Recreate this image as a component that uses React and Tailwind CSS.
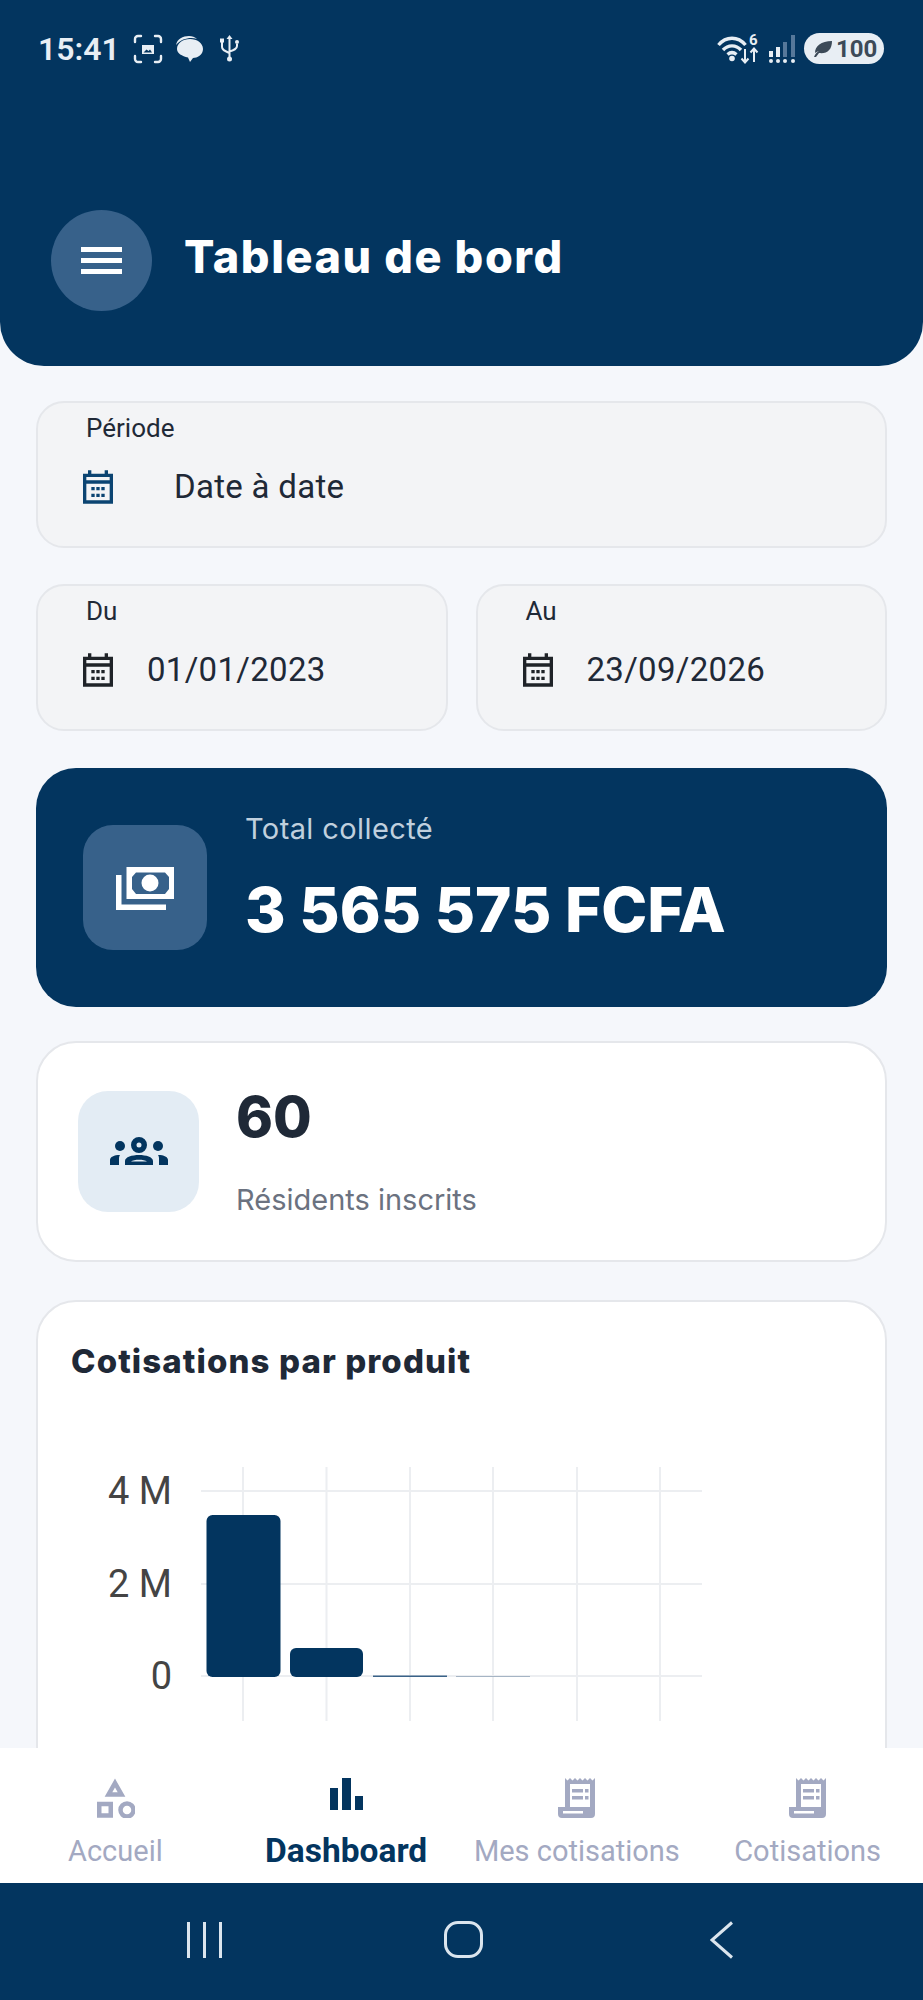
import React from "react";

const navy = "#03355f";

const CalendarIcon = ({ color }) => (
  <svg width="40" height="40" viewBox="0 0 24 24" fill={color} className="shrink-0">
    <path fillRule="evenodd" d="M21 4h-3V2h-2v2H8V2H6v2H3v18h18V4zm-2 16H5V10h14v10zM19 8H5V6h14v2z" />
    <path d="M8 12h2v2H8zM11 12h2v2h-2zM14 12h2v2h-2zM8 16h2v2H8zM11 16h2v2h-2zM14 16h2v2h-2z" />
  </svg>
);

// Status bar glyphs
const StatusLeft = () => (
  <div className="flex items-center ml-[13px]">
    <svg width="30" height="30" viewBox="0 0 30 30" fill="none" stroke="#e8eef4" strokeWidth="2.4" strokeLinecap="round">
      <path d="M2 8V5a3 3 0 0 1 3-3h3M22 2h3a3 3 0 0 1 3 3v3M28 22v3a3 3 0 0 1-3 3h-3M8 28H5a3 3 0 0 1-3-3v-3" />
      <path d="M9 11h12v9H9z" fill="#e8eef4" stroke="none" />
      <path d="M10.500 18.500l3-3 2 1.500 1.500-1.500 2 3z" fill="#03355f" stroke="none" />
    </svg>
    <svg width="28" height="27" viewBox="0 0 28 27" className="ml-[12px]">
      <path d="M1 10C2 4 8 1 14 1c3 0 6 1 8 3-6-2-15-1-21 6z" fill="#e8eef4" />
      <path d="M15 4c7 0 13 4 13 10s-6 9-10 9l-3 4-2-4.500C7 21 2 18.500 2 14 2 8 8 4 15 4z" fill="#e8eef4" />
    </svg>
    <svg width="19" height="27" viewBox="0 0 19 27" className="ml-[17px]" fill="none" stroke="#e8eef4" strokeWidth="2">
      <path d="M9.500 3v21M2 7v5c0 3 3 4 7.500 6M17 9v2c0 3-3 4-7.500 5.500" />
      <path d="M9.500 0l3 4h-6z" fill="#e8eef4" stroke="none" />
      <rect x="0" y="3.500" width="4" height="4" fill="#e8eef4" stroke="none" />
      <circle cx="17" cy="7" r="2" fill="#e8eef4" stroke="none" />
      <circle cx="9.500" cy="24" r="2.500" fill="#e8eef4" stroke="none" />
    </svg>
  </div>
);

const StatusRight = () => (
  <div className="flex items-center mr-[39px]">
    <div className="relative w-[42px] h-[30px]">
      <svg width="42" height="30" viewBox="0 0 42 30" fill="none" stroke="#e8eef4" strokeWidth="3.400">
        <path d="M1.500 11C9 2 21 2 28.500 11M6 16c5-5.500 13-5.500 18 0M10.500 20.500c3-2.500 6-2.500 9 0" />
        <circle cx="15" cy="24.500" r="2.800" fill="#e8eef4" stroke="none" />
        <path d="M28 15v13M24.500 24.500l3.500 4 3.500-4M37 28V15M33.500 18.500l3.500-4 3.500 4" strokeWidth="2" />
      </svg>
      <span className="absolute left-[32px] top-[0px] text-[15px] font-bold leading-[12px] text-[#e8eef4]">6</span>
    </div>
    <svg width="27" height="28" viewBox="0 0 27 28" className="ml-[10px]">
      <g fill="#e8eef4">
        <rect x="0" y="16" width="4" height="6" /><rect x="7" y="12" width="4" height="10" />
        <circle cx="2" cy="26" r="2" /><circle cx="9" cy="26" r="2" /><circle cx="16" cy="26" r="2" /><circle cx="24" cy="26" r="2" />
      </g>
      <g fill="#56789a">
        <rect x="14" y="7" width="4" height="15" /><rect x="22" y="0" width="4" height="22" />
      </g>
    </svg>
    <div className="ml-[8px] w-[80px] h-[31px] rounded-full bg-[#e8eef4] flex items-center pl-[9px]">
      <svg width="20" height="17" viewBox="0 0 20 17" fill="#3c4a58">
        <path d="M1 17c1-3 3-5 5-6-2 .500-3 1.500-4 2C2 6 8 1 19 1c0 9-5 13-13 12l-3 4z" />
      </svg>
      <span className="ml-[3px] text-[24px] font-bold leading-none text-[#3c4a58]">100</span>
    </div>
  </div>
);

const Field = ({ label, value, iconColor, gap, className }) => (
  <div className={`h-[147px] rounded-[28px] border-2 border-[#e5e7eb] bg-[#f3f4f6] pl-[40px] flex flex-col ${className}`}>
    <div className="pl-[8px] pt-[9px] text-[26px] leading-[32px] text-[#1f2937]">{label}</div>
    <div className="flex items-center mt-[21px]">
      <CalendarIcon color={iconColor} />
      <span className={`text-[33px] tracking-[0.3px] leading-[44px] text-[#1f2937] ${gap}`}>{value}</span>
    </div>
  </div>
);

const NavItem = ({ label, active, children }) => (
  <div className="flex flex-col items-center">
    <div className="h-[42px] flex items-end">{children}</div>
    <span className={`mt-[15px] leading-[36px] whitespace-nowrap ${active ? "text-[33.5px] font-bold text-[#03355f]" : "text-[29px] text-[#a3a9c2]"}`}>{label}</span>
  </div>
);

const ReceiptIcon = () => (
  <svg width="38" height="40" viewBox="0 0 38 40" fill="#a3a9c2">
    <path fillRule="evenodd" d="M7 0l2.500 2.500L12 0l2.500 2.500L17 0l2.500 2.500L22 0l2.500 2.500L27 0l2.500 2.500L32 0l2.500 2.500L37 0v36a4 4 0 0 1-4 4H4a4 4 0 0 1-4-4v-7h7zM12 6v23h20V6zM5 33v2.500h20V33z" />
    <path d="M14 11h11v3.500H14zM27 11h3.500v3.500H27zM14 18h11v3.500H14zM27 18h3.500v3.500H27z" />
  </svg>
);

const Chart = () => (
  <svg width="640" height="280" viewBox="0 0 640 280" className="block mt-[85px] -ml-[2px]">
    <g stroke="#eceef1" strokeWidth="2">
      <path d="M132 24H633M132 117H633M132 209H633" />
      <path d="M174 0V254M257.500 0V254M341 0V254M424 0V254M508 0V254M591 0V254" />
    </g>
    <g fill="#444" fontSize="38" textAnchor="end" fontFamily="Roboto, sans-serif">
      <text x="103" y="37">4 M</text>
      <text x="103" y="130">2 M</text>
      <text x="103" y="222">0</text>
    </g>
    <rect x="137.500" y="48" width="74" height="162" rx="6" fill={navy} />
    <rect x="221" y="181" width="73" height="29" rx="6" fill={navy} />
    <rect x="304" y="208.500" width="74" height="1.500" fill="#3a6288" />
    <rect x="387" y="209" width="74" height="1" fill="#a5b4c4" />
  </svg>
);

export default function App() {
  return (
    <div className="h-[2000px] w-[923px] flex flex-col overflow-hidden bg-[#f5f7fb] font-['Roboto',sans-serif]">
      <header className="h-[366px] shrink-0 bg-[#03355f] rounded-b-[44px] flex flex-col">
        <div className="h-[31px] mt-[33px] pl-[38px] flex items-center justify-between">
          <div className="flex items-center">
            <span className="text-[32px] font-semibold leading-none text-[#e8eef4]">15:41</span>
            <StatusLeft />
          </div>
          <StatusRight />
        </div>
        <div className="mt-[146px] pl-[51px] flex items-center">
          <div className="w-[101px] h-[101px] rounded-full bg-[#37618a] flex flex-col items-center justify-center gap-[6px]">
            <span className="block w-[41px] h-[5px] bg-white" />
            <span className="block w-[41px] h-[5px] bg-white" />
            <span className="block w-[41px] h-[5px] bg-white" />
          </div>
          <h1 className="ml-[32px] pb-[8px] text-[45px] font-extrabold tracking-[1.6px] leading-none text-white font-['Inter',sans-serif]">Tableau de bord</h1>
        </div>
      </header>

      <main className="flex-1 min-h-0 overflow-hidden px-[36px] pt-[35px]">
        <Field label="Période" value="Date à date" iconColor="#0b4472" gap="ml-[56px]" />
        <div className="flex gap-[28px] mt-[36px]">
          <Field label="Du" value="01/01/2023" iconColor="#1f2328" gap="ml-[29px]" className="flex-1" />
          <Field label="Au" value="23/09/2026" iconColor="#1f2328" gap="ml-[29px]" className="flex-1" />
        </div>

        <section className="h-[239px] mt-[37px] rounded-[40px] bg-[#03355f] pl-[47px] flex items-center">
          <div className="w-[124px] h-[125px] rounded-[30px] bg-[#37618a] flex items-center justify-center shrink-0">
            <svg width="58" height="43" viewBox="0 0 58 43" fill="white" className="mt-[2px]">
              <path d="M0 8h5.500v29.500H50V43H0z" />
              <path fillRule="evenodd" d="M10.500 0H58v32H10.500zM20 5.500l-4 4.500v12l4 5h29l4-5V10l-4-4.500z" />
              <circle cx="34" cy="16" r="8.500" />
            </svg>
          </div>
          <div className="ml-[38px] -mt-[14px] flex flex-col">
            <span className="text-[29px] tracking-[0.4px] leading-[36px] text-[#c0d0de] font-['Inter',sans-serif]">Total collecté</span>
            <span className="mt-[23px] text-[62px] font-extrabold leading-[80px] whitespace-nowrap text-white font-['Inter',sans-serif]">3 565 575 FCFA</span>
          </div>
        </section>

        <section className="h-[221px] mt-[34px] rounded-[40px] border-2 border-[#e5e7eb] bg-white pl-[40px] flex items-center">
          <div className="w-[121px] h-[121px] rounded-[30px] bg-[#e3ecf4] flex items-center justify-center shrink-0">
            <svg width="58" height="29" viewBox="0 0 58 29" fill="#03355f">
              <circle cx="10" cy="9" r="5" />
              <circle cx="48" cy="9" r="5" />
              <path fillRule="evenodd" d="M29 0a8 8 0 1 1 0 16a8 8 0 0 1 0-16zm0 5.500a2.500 2.500 0 1 0 0 5a2.500 2.500 0 0 0 0-5z" />
              <path fillRule="evenodd" d="M15 28v-4c0-4 7-6 14-6s14 2 14 6v4zM21 24.500h16c-3-2.500-13-2.500-16 0z" />
              <path d="M0 28v-5c0-3 4-5 10-5-1 1-1 3-1 5v5zM58 28v-5c0-3-4-5-10-5 1 1 1 3 1 5v5z" />
            </svg>
          </div>
          <div className="ml-[37px] flex flex-col">
            <span className="text-[56px] font-extrabold leading-[64px] text-[#1f2937] font-['Inter',sans-serif]">60</span>
            <span className="mt-[33px] text-[29px] leading-[36px] text-[#6b7280] font-['Inter',sans-serif]">Résidents inscrits</span>
          </div>
        </section>

        <section className="h-[600px] mt-[38px] rounded-[40px] border-2 border-[#e5e7eb] bg-white pl-[33px] pt-[38px]">
          <h2 className="text-[33px] font-extrabold tracking-[1.1px] leading-[42px] text-[#1f2937] font-['Inter',sans-serif]">Cotisations par produit</h2>
          <Chart />
        </section>
      </main>

      <nav className="h-[135px] shrink-0 bg-white grid grid-cols-4 pt-[28px]">
        <NavItem label="Accueil">
          <svg width="40" height="40" viewBox="0 0 40 40" fill="none" stroke="#a3a9c2" strokeWidth="4.500">
            <path d="M20 5l6.500 11.500h-13z" />
            <rect x="4.250" y="26" width="11.500" height="11.500" />
            <circle cx="32" cy="32" r="6.500" />
          </svg>
        </NavItem>
        <NavItem label="Dashboard" active>
          <div className="flex items-end gap-[4px] h-[32px] mb-[8px]">
            <span className="block w-[8px] h-[22px] bg-[#03355f]" />
            <span className="block w-[9px] h-[32px] bg-[#03355f]" />
            <span className="block w-[8px] h-[14px] bg-[#03355f]" />
          </div>
        </NavItem>
        <NavItem label="Mes cotisations"><ReceiptIcon /></NavItem>
        <NavItem label="Cotisations"><ReceiptIcon /></NavItem>
      </nav>

      <div className="h-[117px] shrink-0 bg-[#03355f] flex items-center pl-[187px] pb-[4px]">
        <div className="flex gap-[13px]">
          <span className="block w-[3px] h-[36px] bg-[#dbe5ee]" />
          <span className="block w-[3px] h-[36px] bg-[#dbe5ee]" />
          <span className="block w-[3px] h-[36px] bg-[#dbe5ee]" />
        </div>
        <span className="block ml-[222px] w-[39px] h-[37px] rounded-[14px] border-[3px] border-[#dbe5ee]" />
        <svg width="24" height="38" viewBox="0 0 24 38" fill="none" stroke="#dbe5ee" strokeWidth="3" className="ml-[227px]">
          <path d="M22 1.500L2 19l20 17.500" />
        </svg>
      </div>
    </div>
  );
}
